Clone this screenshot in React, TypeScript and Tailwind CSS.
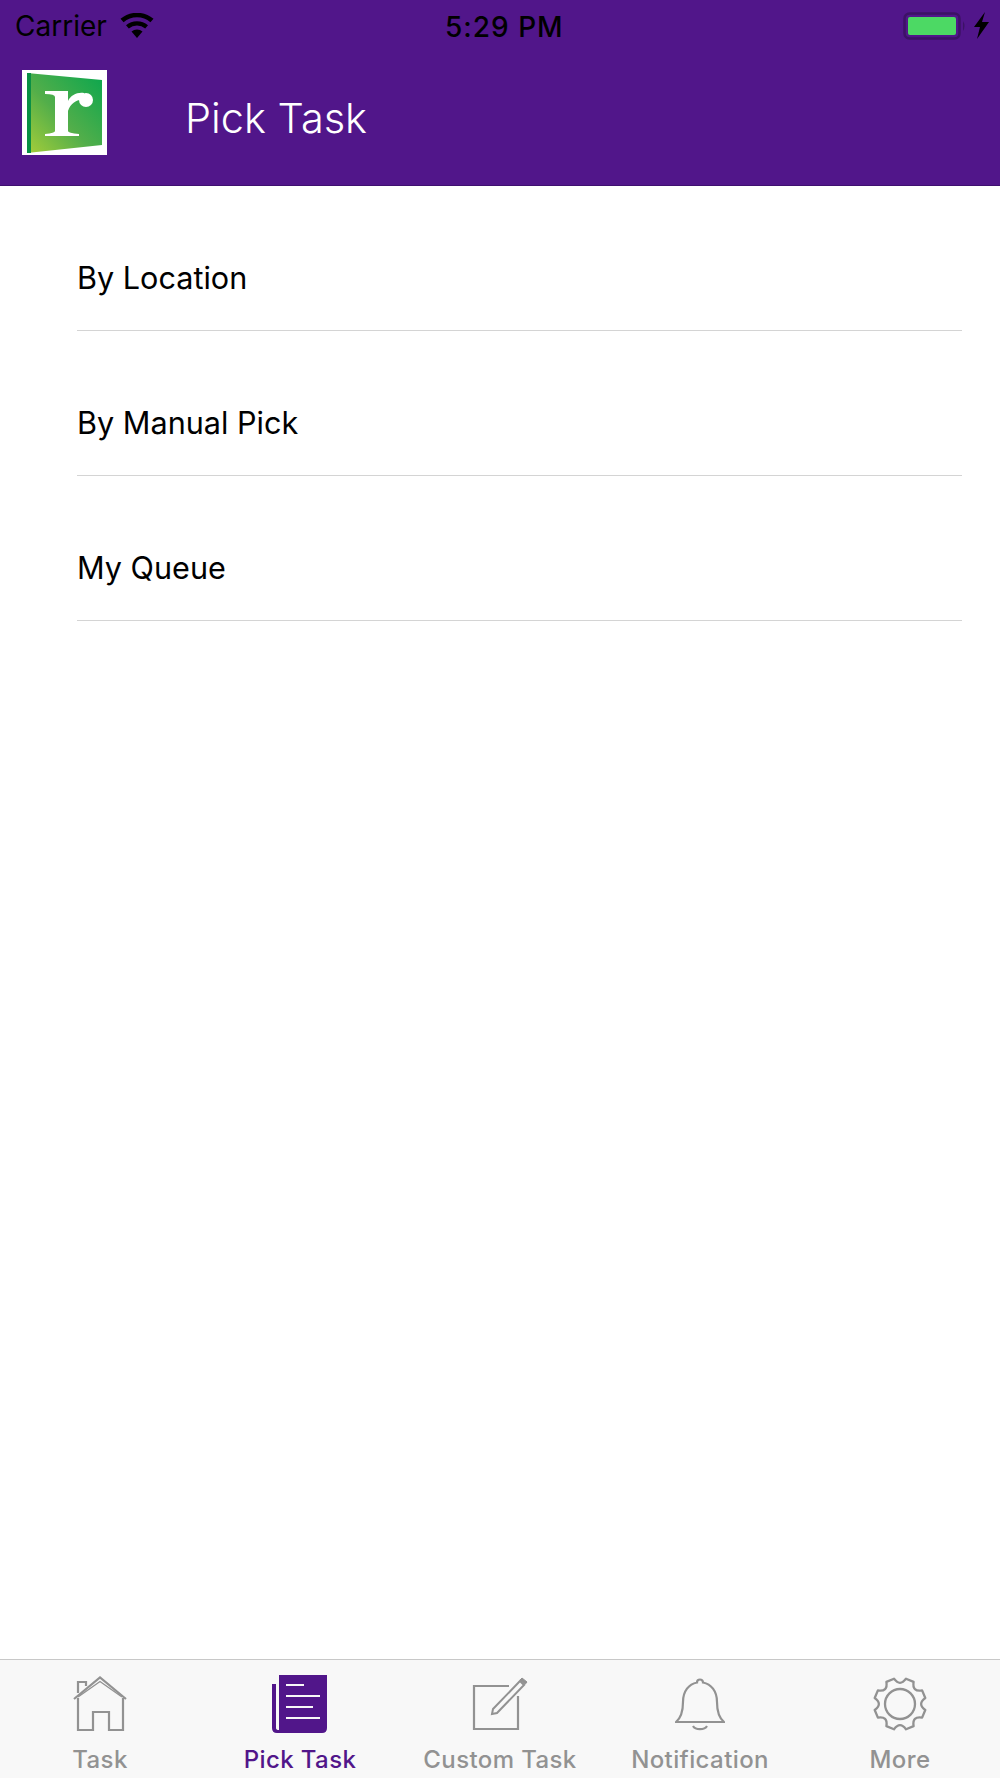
import React from "react";

function Logo() {
  return (
    <svg width="85" height="85" viewBox="0 0 85 85" className="block shrink-0">
      <defs>
        <linearGradient id="lg" x1="0" y1="1" x2="1" y2="0">
          <stop offset="0" stopColor="#a6ce39" />
          <stop offset="0.45" stopColor="#52ae4a" />
          <stop offset="1" stopColor="#0aa64e" />
        </linearGradient>
      </defs>
      <rect width="85" height="85" fill="#fff" />
      <polygon points="5,3 80,10 80,75 5,83" fill="url(#lg)" />
      <polygon points="5,3 9,3 9,83 5,83" fill="#0a8f45" />
      <path
        d="M23 21 H46 V31 C49 25 55 22 62 23 V30 C55 29 49 33 46 41 V61 Q46 63 57 64 V66 H23 V64 Q33 63 33 61 V27 Q33 24 23 24 Z"
        fill="#fff"
      />
      <circle cx="64" cy="30" r="7" fill="#fff" />
    </svg>
  );
}

function Wifi() {
  return (
    <svg width="34" height="26" viewBox="0 0 34 26" className="block">
      <path d="M17 25 L11.5 18.5 A8.5 8.5 0 0 1 22.5 18.5 Z" fill="#000" />
      <path d="M8.8 15.5 A12.5 12.5 0 0 1 25.2 15.5 L28 12.2 A17 17 0 0 0 6 12.2 Z" fill="#000" />
      <path d="M3.6 9.3 A20.5 20.5 0 0 1 30.4 9.3 L33.5 5.8 A25.5 25.5 0 0 0 0.5 5.8 Z" fill="#000" />
    </svg>
  );
}

function Battery() {
  return (
    <svg width="89" height="28" viewBox="0 0 89 28" className="block">
      <rect x="1.5" y="1.5" width="55" height="25" rx="5" fill="none" stroke="#3c1266" strokeWidth="2.5" />
      <rect x="5" y="5" width="48" height="18" rx="2" fill="#4cd964" />
      <path d="M60 9 Q63 14 60 19 Z" fill="#3c1266" />
      <path d="M82 0 L71 15 H77 L74 27 L86 10 H79 Z" fill="#000" />
    </svg>
  );
}

function HomeIcon() {
  return (
    <svg width="54" height="56" viewBox="0 0 54 56" fill="none" stroke="#929292" strokeWidth="2.2" className="block">
      <path d="M1 23 L27 1.5 L53 23" />
      <path d="M5 17 V6 H13 V10" />
      <path d="M5 21 L27 5.5 L49 21" strokeWidth="1.4" />
      <path d="M5 22 V54 H20 V36 H36 V54 H50 V22" />
    </svg>
  );
}

function PickIcon() {
  return (
    <svg width="56" height="60" viewBox="0 0 56 60" className="block">
      <path d="M7 1 H55 V54 Q55 59 50 59 H5 Q0 59 0 54 V10 H4 V54 Q4 56 7 56 Z" fill="#51168a" />
      <path d="M14 11 H32 M14 22 H48 M14 33 H41 M14 44 H48" stroke="#f8f8f8" strokeWidth="2" />
    </svg>
  );
}

function EditIcon() {
  return (
    <svg width="56" height="56" viewBox="0 0 56 56" fill="none" stroke="#929292" className="block">
      <path d="M37 10 H2 V53 H46 V20" strokeWidth="2.2" />
      <path d="M21 33 L48 5 L52 9 L25 37 L20 38 Z" strokeWidth="2" />
      <path d="M50 2 L55 6 L53 8.5 L48 4 Z" fill="#929292" strokeWidth="1" />
    </svg>
  );
}

function BellIcon() {
  return (
    <svg width="50" height="56" viewBox="0 0 50 56" fill="none" stroke="#929292" strokeWidth="2.2" className="block">
      <path d="M1 46 H49 C43 41 42 34 42 26 C42 15 36 8 28 6.5 A3 3 0 0 0 22 6.5 C14 8 8 15 8 26 C8 34 7 41 1 46 Z" />
      <path d="M18 50 A7.5 5 0 0 0 32 50" />
    </svg>
  );
}

function GearIcon() {
  const n = 8;
  const cx = 27;
  const cy = 27;
  let d = "";
  for (let i = 0; i < n; i++) {
    const a = ((i + 0.5) * 2 * Math.PI) / n - Math.PI / 2;
    const w = 0.16;
    const oA = [cx + 26 * Math.cos(a - w), cy + 26 * Math.sin(a - w)];
    const oB = [cx + 26 * Math.cos(a + w), cy + 26 * Math.sin(a + w)];
    const nextA = a + (2 * Math.PI) / n;
    const mid = a + Math.PI / n;
    const ctrl = [cx + 17 * Math.cos(mid), cy + 17 * Math.sin(mid)];
    const oC = [cx + 26 * Math.cos(nextA - w), cy + 26 * Math.sin(nextA - w)];
    d += `${i === 0 ? "M" : "L"}${oA[0].toFixed(1)} ${oA[1].toFixed(1)} L${oB[0].toFixed(1)} ${oB[1].toFixed(1)} Q${ctrl[0].toFixed(1)} ${ctrl[1].toFixed(1)} ${oC[0].toFixed(1)} ${oC[1].toFixed(1)} `;
  }
  d += "Z";
  return (
    <svg width="54" height="54" viewBox="0 0 54 54" fill="none" stroke="#929292" strokeWidth="2.3" strokeLinejoin="round" className="block">
      <path d={d} />
      <circle cx="27" cy="27" r="15" />
    </svg>
  );
}

const tabs = [
  { label: "Task", icon: <HomeIcon />, active: false },
  { label: "Pick Task", icon: <PickIcon />, active: true },
  { label: "Custom Task", icon: <EditIcon />, active: false },
  { label: "Notification", icon: <BellIcon />, active: false },
  { label: "More", icon: <GearIcon />, active: false },
];

export default function App() {
  return (
    <div className="flex h-[1778px] w-[1000px] flex-col overflow-hidden bg-white font-['Inter',sans-serif] text-black">
      <header className="h-[186px] shrink-0 border-b border-[#3f1070] bg-[#51168a]">
        <div className="relative flex h-[50px] items-center justify-between pl-[15px] pr-[8px] pt-[1px]">
          <div className="flex items-center gap-[13px] text-[28px] leading-none">
            <span>Carrier</span>
            <Wifi />
          </div>
          <span className="absolute left-[445px] top-[13px] text-[28px] font-medium leading-none tracking-[1px]">5:29 PM</span>
          <Battery />
        </div>
        <div className="relative flex items-center pl-[22px] pt-[20px]">
          <Logo />
          <span className="ml-[78px] translate-y-[6px] text-[41.5px] font-light leading-none text-white">Pick Task</span>
        </div>
      </header>

      <main className="flex-1 pl-[77px] pr-[38px]">
        {["By Location", "By Manual Pick", "My Queue"].map((t) => (
          <div key={t} className="flex h-[145px] items-start border-b border-[#d4d4d4] pt-[73px] text-[30.6px] leading-[37px]">
            {t}
          </div>
        ))}
      </main>

      <nav className="flex h-[119px] shrink-0 border-t border-[#c8c8c8] bg-[#f8f8f8]">
        {tabs.map((t) => (
          <div key={t.label} className="flex w-[200px] flex-col items-center">
            <div className="flex h-[76px] items-center pt-[11px]">{t.icon}</div>
            <span
              className={`mt-[9px] text-[24px] font-medium leading-[30px] tracking-[0.4px] ${t.active ? "text-[#51168a]" : "text-[#929292]"}`}
            >
              {t.label}
            </span>
          </div>
        ))}
      </nav>
    </div>
  );
}
